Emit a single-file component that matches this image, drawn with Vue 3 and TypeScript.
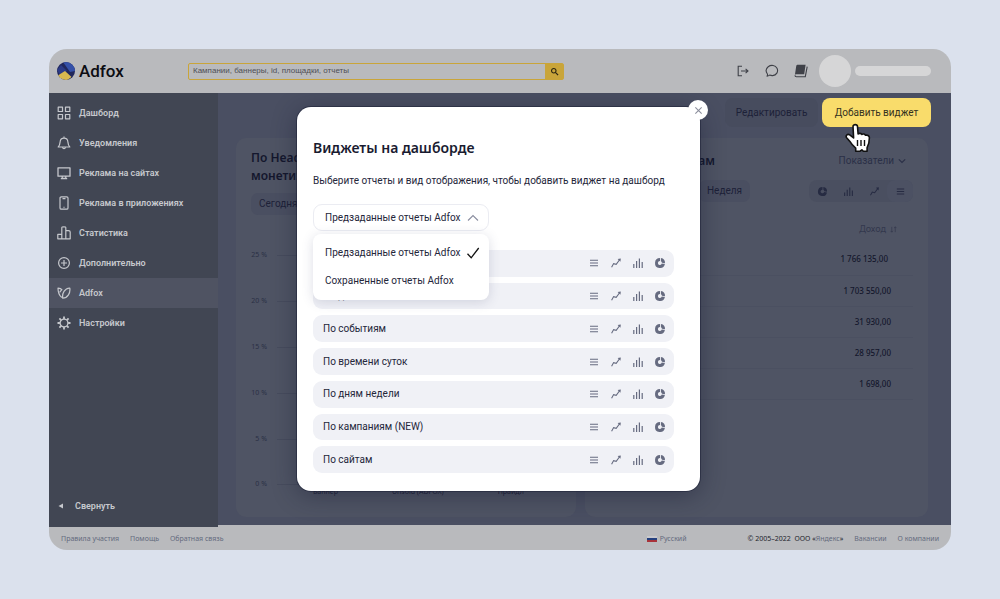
<script setup lang="ts">
import { ref } from 'vue'

type IconName = 'table' | 'line' | 'bars' | 'pie'

interface NavItem {
  id: string
  label: string
}

const nav: NavItem[] = [
  { id: 'dashboard', label: 'Дашборд' },
  { id: 'bell', label: 'Уведомления' },
  { id: 'monitor', label: 'Реклама на сайтах' },
  { id: 'phone', label: 'Реклама в приложениях' },
  { id: 'stats', label: 'Статистика' },
  { id: 'plus', label: 'Дополнительно' },
  { id: 'adfox', label: 'Adfox' },
  { id: 'gear', label: 'Настройки' },
]
const activeNav = ref('adfox')

const views: { icon: IconName; label: string }[] = [
  { icon: 'table', label: 'Таблица' },
  { icon: 'line', label: 'Линейный график' },
  { icon: 'bars', label: 'Столбчатый график' },
  { icon: 'pie', label: 'Круговая диаграмма' },
]
const cardViews = [...views].reverse()

const reports: string[] = [
  'По площадкам',
  'По датам',
  'По событиям',
  'По времени суток',
  'По дням недели',
  'По кампаниям (NEW)',
  'По сайтам',
]
const groups: string[] = ['Предзаданные отчеты Adfox', 'Сохраненные отчеты Adfox']
const group = ref(groups[0])
const query = ref('')

const ticks: string[] = ['25 %', '20 %', '15 %', '10 %', '5 %', '0 %']
const income: string[] = ['1 766 135,00', '1 703 550,00', '31 930,00', '28 957,00', '1 698,00']
</script>

<template>
  <div class="page">
    <svg class="defs" aria-hidden="true">
      <symbol id="i-table" viewBox="0 0 12 12"><path d="M2 3.2h8M2 6h8M2 8.8h8" fill="none" stroke="currentColor" stroke-width="1.1" /></symbol>
      <symbol id="i-line" viewBox="0 0 12 12">
        <path d="M1.6 10.2 3.6 6.6l2.6.8L9.4 3" fill="none" stroke="currentColor" stroke-width="1.1" />
        <path d="M7.6 2 10.8 1.4 10.4 4.8z" fill="currentColor" />
      </symbol>
      <symbol id="i-bars" viewBox="0 0 12 12"><path d="M1.8 7v4M4.6 4v7M7.4 1.5V11M10.2 5v6" fill="none" stroke="currentColor" stroke-width="1.2" /></symbol>
      <symbol id="i-pie" viewBox="0 0 12 12">
        <path d="M6 1a5 5 0 1 0 4.9 6.1L7.8 6.6A2 2 0 1 1 6 4z" fill="currentColor" />
        <path d="M6.9 1a5 5 0 0 1 4.1 5.2L7.9 5.7a2 2 0 0 0-1-1.5z" fill="currentColor" />
      </symbol>
      <symbol id="i-dashboard" viewBox="0 0 14 14"><path d="M1.2 1.2h4.3v4.3H1.2zM8.5 1.2h4.3v4.3H8.5zM1.2 8.5h4.3v4.3H1.2zM8.5 8.5h4.3v4.3H8.5z" fill="none" stroke="currentColor" stroke-width="1.2" stroke-linejoin="round" /></symbol>
      <symbol id="i-bell" viewBox="0 0 14 14"><path d="M1.2 11c1.6-1.3 1.7-2.8 1.9-5C3.3 3.5 4.9 2.2 7 2.2S10.7 3.5 10.9 6c.2 2.2.3 3.7 1.9 5zM7 .6v1.6M5.6 11.2c.2 2 2.6 2 2.8 0" fill="none" stroke="currentColor" stroke-width="1.2" stroke-linejoin="round" /></symbol>
      <symbol id="i-monitor" viewBox="0 0 14 14"><path d="M1 1.8h12v8.4H1zM5.2 10.2v2.3h3.6v-2.3M3.8 12.7h6.4" fill="none" stroke="currentColor" stroke-width="1.3" stroke-linejoin="round" /></symbol>
      <symbol id="i-phone" viewBox="0 0 14 14">
        <rect x="3" y=".8" width="8" height="12.4" rx="1.3" fill="none" stroke="currentColor" stroke-width="1.2" />
        <path d="M5.5 2.6h3M6.4 11.2h1.2" stroke="currentColor" stroke-width="1.1" />
      </symbol>
      <symbol id="i-stats" viewBox="0 0 14 14"><path d="M.8 12.8V8.3h4v4.5zM4.8 12.8V1.6c0-1 4-1 4 0v11.2zM8.8 4.6h2.6c1 0 1.8.4 1.8 1.4v6.8H8.8" fill="none" stroke="currentColor" stroke-width="1.2" stroke-linejoin="round" /></symbol>
      <symbol id="i-plus" viewBox="0 0 14 14">
        <circle cx="7" cy="7" r="5.4" fill="none" stroke="currentColor" stroke-width="1.2" />
        <path d="M7 4v6M4 7h6" stroke="currentColor" stroke-width="1.2" />
      </symbol>
      <symbol id="i-adfox" viewBox="0 0 14 14">
        <path d="M4.8 11.4C2.6 9.8 1 6 1 2.2c1.8 0 3.2.5 4 1.800M2.600 6.400l2.600-3.200M5.700 12.200C5 7 7.500 2.400 12.800 2c.8 4.800-2 10-7.100 10.200z" fill="none" stroke="currentColor" stroke-width="1.2" stroke-linejoin="round" />
      </symbol>
      <symbol id="i-gear" viewBox="0 0 14 14">
        <circle cx="7" cy="7" r="3.9" fill="none" stroke="currentColor" stroke-width="1.3" />
        <path d="M7 .5v2.4M7 11.1v2.4M.5 7h2.4M11.1 7h2.4M2.4 2.4l1.7 1.7M9.900 9.900l1.700 1.700M2.400 11.600l1.700-1.700M9.900 4.100l1.700-1.700" stroke="currentColor" stroke-width="1.8" />
      </symbol>
    </svg>

    <div class="window">
      <header class="top">
        <a class="brand" href="#">
          <svg class="logo" viewBox="0 0 18 18" aria-hidden="true">
            <clipPath id="disc"><circle cx="9" cy="9" r="9" /></clipPath>
            <g clip-path="url(#disc)">
              <path d="M0 0h18v18H0z" fill="#20275c" />
              <path d="M6 0h7l5 5v4l-5 1z" fill="#3450a8" />
              <path d="M0 8 4 3l6 6-7 4z" fill="#2b3a86" />
              <path d="M0 14 8 9l6.500 6-4 3H2z" fill="#d8b850" />
            </g>
          </svg>
          <span>Adfox</span>
        </a>
        <form class="search" @submit.prevent>
          <input v-model="query" type="text" aria-label="Поиск" placeholder="Кампании, баннеры, id, площадки, отчеты" />
          <button type="submit" aria-label="Найти">
            <svg viewBox="0 0 10 10"><circle cx="4.2" cy="4.2" r="2.5" fill="none" stroke="currentColor" stroke-width="1.2" /><path d="m6 6 3 3" stroke="currentColor" stroke-width="1.4" /></svg>
          </button>
        </form>
        <div class="tools">
          <button type="button" aria-label="Выйти">
            <svg viewBox="0 0 14 14"><path d="M6 2.2H2.2v9.600H6M5 7h7M9.600 4.800 12 7 9.600 9.200" fill="none" stroke="currentColor" stroke-width="1.1" /></svg>
          </button>
          <button type="button" aria-label="Сообщения">
            <svg viewBox="0 0 14 14"><path d="M2 12.200c.6-.6.7-1.300.4-2.200C.6 7.500 1 4.500 3.200 2.700 6.200.4 10.400 1.200 12 4.200c1.700 3.400-.6 7.200-4.400 7.400-1.200.1-2.200-.2-3-.5-.8.6-1.600 1-2.600 1.100z" fill="none" stroke="currentColor" stroke-width="1.1" stroke-linejoin="round" /></svg>
          </button>
          <button type="button" aria-label="Справка">
            <svg viewBox="0 0 14 14"><path d="M4 .8h7.600L10.200 10.200H2.400C1.600 10.200.9 10.600.9 11L2.200 2.200C2.400 1.300 3 .8 4 .8z" fill="currentColor" /><path d="M1 11.200c0 .9.5 1.500 1.300 1.500h9L13.200 2.600" fill="none" stroke="currentColor" stroke-width="1.1" /></svg>
          </button>
        </div>
        <span class="avatar"></span>
        <span class="username"></span>
      </header>

      <div class="body">
        <nav class="side">
          <a
            v-for="item in nav"
            :key="item.id"
            href="#"
            :class="['nav-item', { active: item.id === activeNav }]"
            @click.prevent="activeNav = item.id"
          >
            <svg aria-hidden="true"><use :href="`#i-${item.id}`" /></svg>
            <span>{{ item.label }}</span>
          </a>
          <button class="collapse" type="button">
            <svg viewBox="0 0 6 6" aria-hidden="true"><path d="M5 .5v5L.5 3z" fill="currentColor" /></svg>
            <span>Свернуть</span>
          </button>
        </nav>

        <main class="board">
          <div class="actions">
            <button class="edit" type="button">Редактировать</button>
            <button class="add" type="button">Добавить виджет</button>
          </div>
          <div class="cards">
            <section class="card">
              <h2>По Head<br />монетизации</h2>
              <div class="chips"><button type="button">Сегодня</button></div>
              <div class="chart">
                <div v-for="t in ticks" :key="t" class="tick"><span>{{ t }}</span><i></i></div>
              </div>
              <div class="labels"><span>Баннер</span><span>Unsold (ADFOX)</span><span>Прайдл</span></div>
            </section>
            <section class="card right">
              <div class="card-head">
                <h2>По площадкам</h2>
                <button class="metrics" type="button">
                  Показатели
                  <svg viewBox="0 0 8 8" aria-hidden="true"><path d="m.8 2.400 3.200 3 3.200-3" fill="none" stroke="currentColor" stroke-width="1.2" /></svg>
                </button>
              </div>
              <div class="card-tools">
                <div class="chips end"><button type="button">Неделя</button></div>
                <div class="view-group">
                  <button v-for="v in cardViews" :key="v.icon" type="button" :aria-label="v.label" :class="{ on: v.icon === 'table' }">
                    <svg><use :href="`#i-${v.icon}`" /></svg>
                  </button>
                </div>
              </div>
              <table>
                <thead>
                  <tr>
                    <th>
                      <span>Доход</span>
                      <svg viewBox="0 0 8 8" aria-hidden="true"><path d="M2 1v6M.6 5.600 2 7l1.400-1.400M6 7V1M4.600 2.400 6 1l1.400 1.400" fill="none" stroke="currentColor" stroke-width=".8" /></svg>
                    </th>
                  </tr>
                </thead>
                <tbody>
                  <tr v-for="n in income" :key="n"><td>{{ n }}</td></tr>
                </tbody>
              </table>
            </section>
          </div>
        </main>

        <div class="overlay">
          <div class="modal" role="dialog" aria-labelledby="modal-title">
            <button class="close" type="button" aria-label="Закрыть">
              <svg viewBox="0 0 10 10"><path d="m1.500 1.500 7 7M8.500 1.500l-7 7" fill="none" stroke="currentColor" stroke-width="1.2" /></svg>
            </button>
            <h1 id="modal-title">Виджеты на дашборде</h1>
            <p>Выберите отчеты и вид отображения, чтобы добавить виджет на дашборд</p>
            <div class="picker">
              <select v-model="group" aria-label="Группа отчетов">
                <option v-for="g in groups" :key="g">{{ g }}</option>
              </select>
              <svg class="caret" viewBox="0 0 12 12" aria-hidden="true"><path d="m1 8.500 5-5 5 5" fill="none" stroke="currentColor" stroke-width="1.1" /></svg>
              <div class="menu" role="listbox" aria-label="Группа отчетов">
                <button v-for="g in groups" :key="g" type="button" role="option" :aria-selected="g === group" @click="group = g">
                  <span>{{ g }}</span>
                  <svg v-if="g === group" viewBox="0 0 14 14" aria-hidden="true"><path d="m1.500 7.800 3.700 4L12.700 2" fill="none" stroke="currentColor" stroke-width="1.3" /></svg>
                </button>
              </div>
            </div>
            <ul class="reports">
              <li v-for="r in reports" :key="r">
                <span>{{ r }}</span>
                <button v-for="v in views" :key="v.icon" type="button" :aria-label="`${r}: ${v.label}`">
                  <svg><use :href="`#i-${v.icon}`" /></svg>
                </button>
              </li>
            </ul>
          </div>
        </div>

        <svg class="hand" viewBox="0 0 26 30" aria-hidden="true">
          <path
            d="M8 3.400C8 1 12.300 1 12.500 3.400l.6 7.600c.8-1 3.200-.9 3.800.5 1-.8 2.900-.6 3.500.8 1.900-.6 4 .4 4 2.500 0 3.500-.6 6.800-2.300 9.800v3.600h-3.800l-1.400-1.400-1.800 1.400h-4.400v-3C8 23 6.200 20.800 4.700 18.200L1.400 14.500c-1-2.200 1.300-3.900 3.300-2.600l3.900 3z"
            fill="#fff"
            stroke="#111"
            stroke-width="1.6"
            stroke-linejoin="round"
          />
          <path d="M12.500 17v6M16 17v6M19.500 17v6" stroke="#111" stroke-width="1.4" />
        </svg>
      </div>

      <footer class="foot">
        <a href="#">Правила участия</a>
        <a href="#">Помощь</a>
        <a href="#">Обратная связь</a>
        <button class="lang" type="button"><i class="flag"></i>Русский</button>
        <span class="copy">© 2005–2022&nbsp; ООО «<a href="#">Яндекс</a>»</span>
        <a href="#">Вакансии</a>
        <a href="#">О компании</a>
      </footer>
    </div>
  </div>
</template>

<style>
body {
  margin: 0;
  background: #dbe1ed;
}
</style>

<style scoped>
* {
  box-sizing: border-box;
}
.page {
  min-height: 100vh;
  padding: 49px;
  display: flex;
  font-family: Roboto, 'Noto Sans', sans-serif;
  font-size: 10px;
  line-height: 14px;
}
.defs {
  position: absolute;
  width: 0;
  height: 0;
}
button,
input,
select {
  font: inherit;
  color: inherit;
  border: 0;
  margin: 0;
  padding: 0;
  background: none;
}
button {
  cursor: pointer;
}
svg {
  display: block;
  flex: none;
}
a {
  color: inherit;
  text-decoration: none;
}
h1,
h2,
p,
ul {
  margin: 0;
  padding: 0;
}
h1,
h2,
table,
.chart,
.labels,
.foot {
  font-family: 'Noto Sans', 'Open Sans', sans-serif;
}
.window {
  flex: 1;
  min-width: 0;
  display: flex;
  flex-direction: column;
  border-radius: 18px;
  overflow: hidden;
  background: #b9babd;
}
.top {
  height: 44px;
  display: flex;
  align-items: center;
  padding: 0 20px 0 8px;
}
.brand {
  display: flex;
  align-items: center;
  gap: 4px;
  width: 131px;
  color: #0c0d12;
  font-size: 17px;
  font-weight: 500;
  line-height: 20px;
}
.logo {
  width: 18px;
  height: 18px;
}
.search {
  display: flex;
  flex: 0 1 376px;
  height: 17px;
  border: 1px solid #c9a53a;
  border-radius: 2px;
}
.search input {
  flex: 1;
  min-width: 0;
  padding: 0 4px;
  font-family: 'Liberation Sans', Arial, sans-serif;
  font-size: 8px;
  outline: 0;
}
.search input::placeholder {
  color: #4e4f55;
  opacity: 1;
}
.search button {
  width: 18px;
  display: grid;
  place-items: center;
  background: #c9a53a;
  color: #2b2612;
}
.search button svg {
  width: 9px;
  height: 9px;
}
.tools {
  margin-left: auto;
  display: flex;
  gap: 15px;
  color: #3f4148;
}
.tools svg {
  width: 14px;
  height: 14px;
}
.avatar {
  width: 32px;
  height: 32px;
  border-radius: 50%;
  background: #d6d6d7;
  margin: 0 4px 0 11px;
}
.username {
  width: 76px;
  height: 10px;
  border-radius: 5px;
  background: #d6d6d7;
}
.body {
  position: relative;
  flex: 1;
  display: flex;
  overflow: hidden;
}
.side {
  width: 169px;
  display: flex;
  flex-direction: column;
  padding: 5px 0 14px;
  background: #414653;
  color: #c6c8cd;
  font-size: 9px;
  font-weight: 600;
}
.nav-item {
  height: 30px;
  display: flex;
  align-items: center;
  gap: 8px;
  padding-left: 8px;
}
.nav-item svg {
  width: 14px;
  height: 14px;
}
.nav-item.active {
  background: #4f5362;
}
.collapse {
  margin-top: auto;
  display: flex;
  align-items: center;
  gap: 11px;
  padding-left: 9px;
}
.collapse svg {
  width: 6px;
  height: 6px;
}
.board {
  flex: 1;
  min-width: 0;
  display: flex;
  flex-direction: column;
  margin-bottom: 2px;
  padding: 5px 20px 8px 18px;
  background: #4a4f62;
  color: #1d2138;
}
.actions {
  display: flex;
  justify-content: flex-end;
  gap: 4px;
}
.actions button {
  height: 29px;
  border-radius: 8px;
  font-size: 10px;
}
.edit {
  width: 93px;
  background: #474c5e;
}
.add {
  position: relative;
  z-index: 3;
  width: 109px;
  background: #f9dc6b;
  color: #35321f;
}
.cards {
  flex: 1;
  display: grid;
  grid-template-columns: 340px minmax(0, 1fr);
  gap: 9px;
  margin: 11px 3px 0 0;
}
.card {
  display: flex;
  flex-direction: column;
  padding: 11px 15px;
  border-radius: 10px;
  background: #4f5464;
}
.card h2 {
  font-size: 12px;
  font-weight: 600;
  line-height: 18px;
  color: #14172d;
}
.chips {
  display: flex;
  margin-top: 8px;
}
.chips button {
  height: 22px;
  padding: 0 8px;
  border-radius: 7px;
  background: #4a4f61;
}
.chart {
  margin-top: 17px;
  display: flex;
  flex-direction: column;
  font-size: 7px;
  color: #2b3045;
}
.tick {
  display: flex;
  align-items: center;
  gap: 10px;
  height: 46px;
}
.tick span {
  width: 16px;
  text-align: right;
  white-space: nowrap;
}
.tick i {
  flex: 1;
  height: 1px;
  background: #474c5d;
}
.chart .tick:last-child {
  height: 44px;
}
.labels {
  display: flex;
  gap: 54px;
  padding-left: 62px;
  margin-top: -21px;
  font-size: 7px;
}
.right {
  padding-right: 15px;
}
.card-head,
.card-tools {
  display: flex;
  justify-content: space-between;
  align-items: center;
}
.card-head {
  height: 24px;
}
.card-head h2 {
  width: 115px;
  text-align: right;
}
.metrics {
  display: flex;
  align-items: center;
  gap: 4px;
  padding-right: 7px;
  color: #2b3047;
}
.metrics svg {
  width: 8px;
  height: 8px;
}
.card-tools {
  margin-top: 7px;
}
.chips.end {
  width: 150px;
  justify-content: flex-end;
  margin: 0;
}
.view-group {
  display: flex;
  border-radius: 8px;
  background: #4a4f60;
  color: #262b42;
}
.view-group button {
  width: 26px;
  height: 22px;
  display: grid;
  place-items: center;
  border-radius: 8px;
}
.view-group .on {
  background: #4c5163;
}
.view-group svg {
  width: 11px;
  height: 11px;
}
table {
  margin-top: 12px;
  border-collapse: collapse;
  font-size: 8px;
}
th {
  height: 30px;
  padding: 0 16px 0 0;
  text-align: right;
  font-size: 9px;
  font-weight: 400;
  line-height: 12px;
  color: #33384d;
}
th span,
th svg {
  display: inline-block;
  vertical-align: middle;
}
th svg {
  width: 7px;
  height: 7px;
  margin-left: 4px;
}
td {
  height: 31px;
  padding: 0 22px 0 0;
  text-align: right;
  font-weight: 500;
  color: #14172c;
  border-bottom: 1px solid #4b5061;
}
tbody tr:first-child td {
  padding-right: 25px;
}
.overlay {
  position: absolute;
  inset: 0;
  display: flex;
  justify-content: center;
  padding: 14px 3px 36px 0;
}
.modal {
  position: relative;
  width: 403px;
  display: flex;
  flex-direction: column;
  padding: 31px 26px 18px 16px;
  border-radius: 14px;
  background: #fff;
  color: #24263a;
  box-shadow: 0 0 0 1px rgba(25, 29, 52, 0.5), 0 4px 24px rgba(22, 26, 48, 0.45);
}
h1 {
  font-size: 14px;
  font-weight: 600;
  line-height: 20px;
  color: #191b30;
}
.modal p {
  margin-top: 16px;
  white-space: nowrap;
}
.close {
  position: absolute;
  top: -7px;
  right: -8px;
  width: 20px;
  height: 20px;
  display: grid;
  place-items: center;
  border-radius: 50%;
  background: #fff;
  color: #8b8e9c;
}
.close svg {
  width: 9px;
  height: 9px;
}
.picker {
  position: relative;
  width: 176px;
  margin-top: 16px;
}
.picker select {
  display: block;
  width: 100%;
  height: 27px;
  padding: 0 24px 0 11px;
  appearance: none;
  border: 1px solid #ebecf2;
  border-radius: 9px;
  background: #fff;
}
.caret {
  position: absolute;
  top: 8px;
  right: 10px;
  width: 12px;
  height: 12px;
  color: #8a8d9f;
  pointer-events: none;
}
.menu {
  position: absolute;
  z-index: 2;
  top: 30px;
  left: 0;
  right: 0;
  padding: 5px 0;
  border-radius: 8px;
  background: #fff;
  box-shadow: 0 2px 12px rgba(60, 68, 110, 0.18);
}
.menu button {
  width: 100%;
  height: 28px;
  display: flex;
  align-items: center;
  justify-content: space-between;
  padding: 0 9px 0 12px;
  white-space: nowrap;
}
.menu svg {
  width: 14px;
  height: 14px;
  color: #111;
}
.reports {
  flex: 1;
  display: flex;
  flex-direction: column;
  gap: 6px;
  margin-top: 19px;
  list-style: none;
}
.reports li {
  flex: 1;
  display: flex;
  align-items: center;
  gap: 10px;
  padding: 0 8px 0 10px;
  border-radius: 9px;
  background: #f0f1f6;
}
.reports span {
  flex: 1;
}
.reports button {
  color: #666b80;
}
.reports svg {
  width: 12px;
  height: 12px;
}
.hand {
  position: absolute;
  z-index: 4;
  top: 30px;
  right: 80px;
  width: 26px;
  height: 30px;
}
.foot {
  height: 23px;
  display: flex;
  align-items: center;
  gap: 11px;
  padding: 0 12px;
  font-size: 7px;
  color: #646a7d;
  white-space: nowrap;
}
.lang {
  display: flex;
  align-items: center;
  gap: 3px;
  margin: 0 50px 0 auto;
}
.flag {
  width: 10px;
  height: 6px;
  background: linear-gradient(#c9c9cc 0 33%, #25407e 33% 66%, #a8323a 66%);
}
.copy {
  color: #22242c;
}
.copy a {
  color: #646a7d;
}
</style>
